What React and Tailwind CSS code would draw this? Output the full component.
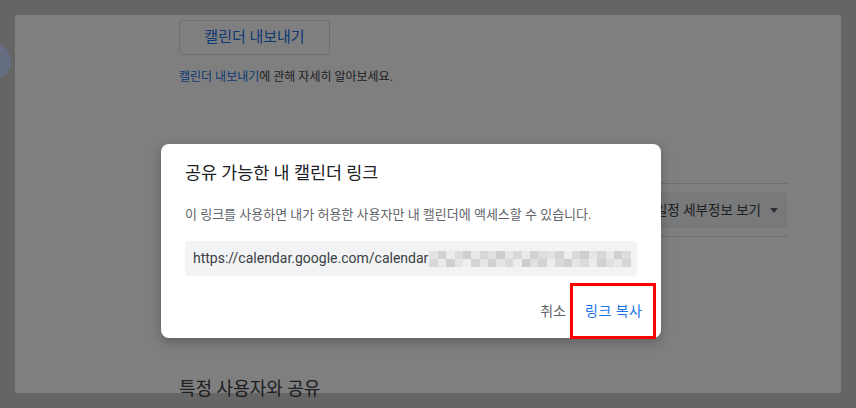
import React from "react";

// grey levels for the blurred tail of the calendar link
const mosaic = [
  ["#e4e4e4", "#d2d2d2", "#ececec", "#dcdcdc", "#cfcfcf", "#e8e8e8", "#d6d6d6", "#e0e0e0", "#cccccc", "#e6e6e6", "#d8d8d8", "#eaeaea", "#d0d0d0", "#dedede", "#e2e2e2", "#d4d4d4", "#eeeeee", "#d9d9d9", "#cdcdcd", "#e5e5e5", "#d7d7d7", "#e9e9e9", "#cfcfcf", "#dddddd"],
  ["#d8d8d8", "#eaeaea", "#cfcfcf", "#e3e3e3", "#f0f0f0", "#d5d5d5", "#e7e7e7", "#d1d1d1", "#e5e5e5", "#d9d9d9", "#ececec", "#cdcdcd", "#e1e1e1", "#d3d3d3", "#eeeeee", "#dadada", "#d0d0d0", "#e6e6e6", "#dbdbdb", "#ebebeb", "#d2d2d2", "#e0e0e0", "#e8e8e8", "#d6d6d6"],
];

const SettingsPage = () => (
  <div className="ml-[179px] w-[608px] pt-[20px]">
    <button className="w-[151px] h-[35px] rounded border border-[#dadce0] text-[15px] text-[#1a73e8]">
      캘린더 내보내기
    </button>
    <p className="mt-[14px] text-[12px] leading-[16px] text-[#3c4043]">
      <span className="text-[#1a73e8]">캘린더 내보내기</span>에 관해 자세히 알아보세요.
    </p>
    <div className="mt-[98px] border-t border-[#dadce0]" />
    <div className="flex justify-end mt-[8px]">
      <div className="flex items-center h-[36px] rounded bg-[#f1f3f4] pl-4 pr-[9px] gap-[9px]">
        <span className="text-[13.5px] text-[#3c4043]">일정 세부정보 보기</span>
        <span className="w-0 h-0 border-x-[4px] border-x-transparent border-t-[5px] border-t-[#5f6368]" />
      </div>
    </div>
    <div className="mt-[8px] border-t border-[#dadce0]" />
    <h2 className="mt-[139px] text-[18px] leading-[26px] text-[#3c4043]">특정 사용자와 공유</h2>
  </div>
);

const ShareDialog = () => (
  <div className="absolute left-[161px] top-[144px] w-[500px] h-[194px] rounded-lg bg-white shadow-[0_4px_12px_rgba(0,0,0,0.25)] px-6 flex flex-col">
    <h3 className="mt-[18px] text-[17.4px] leading-[22px] text-[#202124]">공유 가능한 내 캘린더 링크</h3>
    <p className="mt-[23px] text-[13px] leading-[16px] text-[#5f6368]">
      이 링크를 사용하면 내가 허용한 사용자만 내 캘린더에 액세스할 수 있습니다.
    </p>
    <div className="mt-[18px] h-[35px] rounded bg-[#f1f3f4] flex items-center pl-2">
      <span className="text-[14px] text-[#3c4043]">https://calendar.google.com/calendar</span>
      <div className="flex flex-col ml-px">
        {mosaic.map((row, r) => (
          <div key={r} className="flex">
            {row.map((c, i) => (
              <div key={i} className="w-[8.4px] h-[8px]" style={{ backgroundColor: c }} />
            ))}
          </div>
        ))}
      </div>
    </div>
    <div className="flex justify-end items-center mt-auto -mb-[1px] -mr-[19px]">
      <span className="text-[14px] text-[#5f6368] mr-[4px]">취소</span>
      <div className="w-[86px] h-[56px] border-[3px] border-[#ff0000] flex items-center pl-[12px]">
        <span className="text-[14px] text-[#1a73e8] tracking-[0.5px]">링크 복사</span>
      </div>
    </div>
  </div>
);

export default function App() {
  return (
    <div
      className="relative w-[856px] h-[408px] overflow-hidden bg-white"
      style={{ fontFamily: 'Roboto, "Noto Sans CJK KR", sans-serif' }}
    >
      <SettingsPage />
      <div className="absolute inset-0 bg-black/50" />
      <div className="absolute inset-0 border-[15px] border-black/20" />
      {/* side avatar peeking in from the left edge */}
      <div className="absolute left-[-26px] top-[43px] w-[37px] h-[37px] rounded-full bg-[#656d82]" />
      <ShareDialog />
    </div>
  );
}
